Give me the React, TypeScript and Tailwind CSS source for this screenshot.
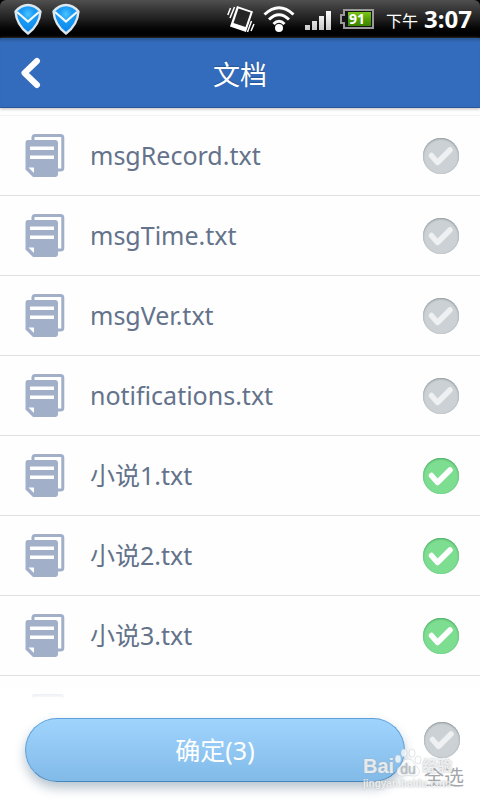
import { useState } from "react";

const files = [
  { name: "msgRecord.txt", checked: false },
  { name: "msgTime.txt", checked: false },
  { name: "msgVer.txt", checked: false },
  { name: "notifications.txt", checked: false },
  { name: "小说1.txt", checked: true },
  { name: "小说2.txt", checked: true },
  { name: "小说3.txt", checked: true },
  { name: "", checked: false },
];

function Shield() {
  return (
    <svg width="30" height="32" viewBox="0 0 30 32" aria-hidden="true">
      <defs>
        <radialGradient id="shield" cx="50%" cy="32%" r="60%">
          <stop offset="0" stopColor="#4cc4ff" />
          <stop offset="0.4" stopColor="#1c9df5" />
          <stop offset="1" stopColor="#0a86ea" />
        </radialGradient>
      </defs>
      <path d="M2.500 8.500Q8 2 15 2Q22 2 27.500 8.500Q26.500 22 15 30.500Q3.500 22 2.500 8.500Z" fill="url(#shield)" stroke="#dde7ee" strokeWidth="2.400" strokeLinejoin="round" />
      <path d="M4 9L15 18.500L26 9" fill="none" stroke="#f2f9fd" strokeWidth="2.200" />
    </svg>
  );
}

function VibrateIcon() {
  return (
    <svg width="28" height="28" viewBox="0 0 28 28" fill="none" stroke="#fff" aria-hidden="true">
      <path d="M10 1L26 6.500L19 27L3 21.500Z" fill="#fff" stroke="none" />
      <path d="M11.500 3.500L23.500 7.500L18.500 22L6.500 18Z" fill="#262626" stroke="none" />
      <path d="M3.500 3L0.800 10M7.500 2L3 13M24.500 16L20.500 27M27 19L24 26" strokeWidth="1.500" />
    </svg>
  );
}

function WifiIcon() {
  return (
    <svg width="32" height="28" viewBox="0 0 32 28" fill="none" stroke="#fff" strokeWidth="3" aria-hidden="true">
      <path d="M1.500 9.500Q16-4 30.500 9.500M6 14.500Q16 5 26 14.500M10.500 19Q16 13.500 21.500 19" />
      <circle cx="16" cy="23" r="4" fill="#fff" stroke="none" />
    </svg>
  );
}

function SignalIcon() {
  return (
    <svg width="27" height="20" viewBox="0 0 27 20" fill="url(#bars)" aria-hidden="true">
      <defs>
        <linearGradient id="bars" gradientUnits="userSpaceOnUse" x1="0" y1="0" x2="0" y2="20">
          <stop offset="0" stopColor="#fff" />
          <stop offset="1" stopColor="#c4c4c4" />
        </linearGradient>
      </defs>
      <path d="M0 14H5V19H0ZM7 10H12V19H7ZM14 5H19V19H14ZM21 0H26V19H21Z" />
    </svg>
  );
}

function Battery() {
  return (
    <div className="grid h-5 w-[34px] place-items-center">
      <svg className="col-start-1 row-start-1" width="34" height="20" viewBox="0 0 34 20" aria-hidden="true">
        <defs>
          <linearGradient id="charge" x1="0" y1="0" x2="0" y2="1">
            <stop offset="0" stopColor="#7cc51c" />
            <stop offset="0.500" stopColor="#55a007" />
            <stop offset="1" stopColor="#3c8200" />
          </linearGradient>
        </defs>
        <path d="M4 1H33V19H4V14H1V6H4Z" fill="#141414" stroke="#999" strokeWidth="2" />
        <path d="M8 3H31V17H8Z" fill="url(#charge)" />
      </svg>
      <span className="col-start-1 row-start-1 text-sm leading-4 font-bold text-white">91</span>
    </div>
  );
}

function FileIcon() {
  return (
    <svg width="40" height="44" viewBox="0 0 40 44" className="shrink-0" aria-hidden="true">
      <path d="M8 6V3.500Q8 1.500 10 1.500H35.500Q37.800 1.500 37.800 3.500V34Q37.800 36 35.500 36H32" fill="none" stroke="#a1afc9" strokeWidth="3" />
      <path d="M3 6H30Q33 6 33 9V40Q33 43 30 43H8L0.500 35.500V9Q0.500 6 3 6Z" fill="#a1afc9" />
      <path d="M5 12.500H29V16H5ZM5 21.500H29V25H5ZM3.500 33.500H9V39Z" fill="#fff" />
    </svg>
  );
}

function RoundCheck({ id, label, checked, onChange }: { id: string; label: string; checked: boolean; onChange: () => void }) {
  return (
    <span className="grid size-9 shrink-0">
      <input
        id={id}
        type="checkbox"
        aria-label={label}
        checked={checked}
        onChange={onChange}
        className="peer col-start-1 row-start-1 size-9 appearance-none rounded-full bg-[#cbd1d4] shadow-[inset_0_1px_2px_#8f989d,inset_0_0_1px_#a5adb1] checked:bg-[#7ddd91] checked:shadow-[inset_0_1px_2px_#4baa63,inset_0_0_1px_#60bf77]"
      />
      <svg
        className="pointer-events-none col-start-1 row-start-1 text-[#eef0f1] peer-checked:text-white"
        width="36" height="36" viewBox="0 0 36 36" fill="none" stroke="currentColor" strokeWidth="5.500" strokeLinecap="round" strokeLinejoin="round" aria-hidden="true"
      >
        <path d="M8.500 17.500L14.500 24.500L27 12" />
      </svg>
    </span>
  );
}

function Watermark() {
  return (
    <div className="pointer-events-none absolute right-[25px] bottom-2.5 w-[92px] font-['Liberation_Sans','Noto_Sans_CJK_SC',sans-serif] font-bold text-white/75 [text-shadow:0_0_2px_#a4aaae]">
      <div className="flex h-8 items-end">
        <span className="text-xl leading-6">Bai</span>
        <span className="grid w-7 place-items-center">
          <svg className="col-start-1 row-start-1" width="28" height="30" viewBox="0 0 28 30" fill="#fff" fillOpacity="0.75" stroke="#b9c0c4" strokeOpacity="0.600" strokeWidth="0.700" aria-hidden="true">
            <ellipse cx="4" cy="11" rx="3" ry="4" />
            <ellipse cx="10" cy="5" rx="3" ry="4" />
            <ellipse cx="18" cy="5" rx="3" ry="4" />
            <ellipse cx="24" cy="12" rx="3" ry="4" />
            <path d="M14 11C8 11 9 16 5 19C1 22 3 29 9 28Q14 27 19 28C26 29 27 22 23 19C19 16 20 11 14 11Z" />
          </svg>
          <span className="col-start-1 row-start-1 pt-3 text-sm leading-4 font-normal text-[#b4bcc2]">du</span>
        </span>
        <span className="text-[15px] leading-6">经验</span>
      </div>
      <div className="text-[10px] leading-3">jingyan.baidu.com</div>
    </div>
  );
}

export default function App() {
  const [items, setItems] = useState(files);
  const count = items.filter((f) => f.checked).length;
  const all = count === items.length;
  const toggle = (i: number) => setItems(items.map((f, n) => (n === i ? { ...f, checked: !f.checked } : f)));

  return (
    <div className="flex h-screen flex-col bg-[#fefefe] font-['Noto_Sans','Noto_Sans_CJK_SC',sans-serif]">
      <div className="shrink-0 bg-black">
        <div className="flex h-[38px] items-center justify-between rounded-t-md bg-linear-to-b from-[#505050] via-[#202020] to-black pr-2 pl-[13px] text-white">
          <div className="flex gap-2">
            <Shield />
            <Shield />
          </div>
          <div className="flex items-center">
            <VibrateIcon />
            <span className="ml-2"><WifiIcon /></span>
            <span className="ml-2.5 pt-1"><SignalIcon /></span>
            <span className="ml-2"><Battery /></span>
            <span className="ml-3 pt-1 text-base leading-6">下午</span>
            <span className="ml-1.5 text-2xl leading-8 font-bold">3:07</span>
          </div>
        </div>
      </div>

      <header className="z-10 grid h-[70px] shrink-0 grid-cols-[64px_1fr_64px] items-center border-b border-[#2c5796] bg-[#346cbd] text-white shadow-[inset_0_4px_3px_-2px_#28558f,0_1px_3px_#bbbbbb]">
        <button type="button" aria-label="返回" className="flex h-full items-center pl-5">
          <svg width="22" height="32" viewBox="0 0 22 32" fill="none" stroke="#fff" strokeWidth="6" strokeLinecap="round" strokeLinejoin="round" aria-hidden="true">
            <path d="M17 4L4.500 16L17 28" />
          </svg>
        </button>
        <h1 className="pt-1 text-center text-[27px] leading-9 [text-shadow:0_-1px_1px_#28558f]">文档</h1>
      </header>

      <div className="relative min-h-0 flex-1 overflow-hidden">
        <ul className="mt-[7px] border-t border-[#f1f2f3]">
          {items.map((f, i) => (
            <li key={i} className="flex h-20 items-center border-b border-[#dfe0e2] pr-[21px] pl-[25px]">
              <FileIcon />
              <label htmlFor={"file-" + i} className="min-w-0 flex-1 truncate pb-0.5 pl-[25px] text-[25px] leading-10 text-[#64738b]">
                {f.name}
              </label>
              <RoundCheck id={"file-" + i} label={f.name || "文件"} checked={f.checked} onChange={() => toggle(i)} />
            </li>
          ))}
        </ul>
        <div className="pointer-events-none absolute inset-x-0 bottom-0 h-6 bg-linear-to-b from-white/0 to-white" />
      </div>

      <footer className="relative flex h-[101px] shrink-0 items-start bg-white pt-[19px] pr-3.5 pl-[25px]">
        <button
          type="button"
          className="h-16 flex-1 rounded-full border border-[#5d9fd8] border-b-[#4585bd] bg-linear-to-b from-[#9fd4fd] to-[#82bae8] text-[25px] leading-10 text-white shadow-[0_6px_12px_#b7c4ce]"
        >
          确定({count})
        </button>
        <div className="ml-[13px] flex w-12 flex-col items-center pt-1">
          <RoundCheck id="all" label="全选" checked={all} onChange={() => setItems(items.map((f) => ({ ...f, checked: !all })))} />
          <label htmlFor="all" className="pl-1 text-xl leading-10 text-[#a3a6aa]">全选</label>
        </div>
        <Watermark />
      </footer>
    </div>
  );
}
